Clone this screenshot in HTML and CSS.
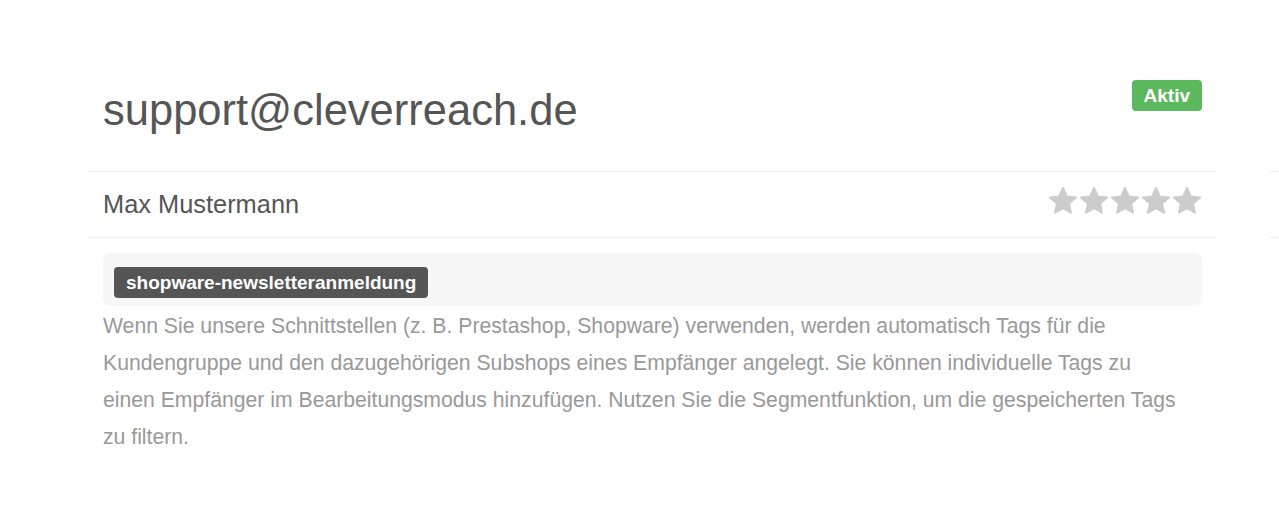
FILE: index.html
```
<!DOCTYPE html>
<html lang="de">

<head>
    <meta charset="UTF-8">
    <meta name="viewport" content="width=device-width, initial-scale=1.0">
    <title>Empfänger</title>
    <link rel="stylesheet" href="styles.css">
</head>

<body>
    <div class="cards">
        <div class="card">
            <div class="card-head">
                <h1 class="email">support@cleverreach.de</h1>
                <span class="badge">Aktiv</span>
            </div>
            <div class="card-name">
                <span class="name">Max Mustermann</span>
                <div class="stars">
                    <svg class="star" viewBox="0 0 30 30"><polygon points="15,2 18.8,10.4 28,11.4 21.1,17.6 23,26.7 15,22.1 7,26.7 8.9,17.6 2,11.4 11.2,10.4"/></svg>
                    <svg class="star" viewBox="0 0 30 30"><polygon points="15,2 18.8,10.4 28,11.4 21.1,17.6 23,26.7 15,22.1 7,26.7 8.9,17.6 2,11.4 11.2,10.4"/></svg>
                    <svg class="star" viewBox="0 0 30 30"><polygon points="15,2 18.8,10.4 28,11.4 21.1,17.6 23,26.7 15,22.1 7,26.7 8.9,17.6 2,11.4 11.2,10.4"/></svg>
                    <svg class="star" viewBox="0 0 30 30"><polygon points="15,2 18.8,10.4 28,11.4 21.1,17.6 23,26.7 15,22.1 7,26.7 8.9,17.6 2,11.4 11.2,10.4"/></svg>
                    <svg class="star" viewBox="0 0 30 30"><polygon points="15,2 18.8,10.4 28,11.4 21.1,17.6 23,26.7 15,22.1 7,26.7 8.9,17.6 2,11.4 11.2,10.4"/></svg>
                </div>
            </div>
            <div class="card-body">
                <div class="tags">
                    <span class="tag">shopware-newsletteranmeldung</span>
                </div>
                <p class="hint">Wenn Sie unsere Schnittstellen (z. B. Prestashop, Shopware) verwenden, werden automatisch Tags für die<br>
                    Kundengruppe und den dazugehörigen Subshops eines Empfänger angelegt. Sie können individuelle Tags zu<br>
                    einen Empfänger im Bearbeitungsmodus hinzufügen. Nutzen Sie die Segmentfunktion, um die gespeicherten Tags<br>
                    zu filtern.</p>
            </div>
        </div>
        <div class="card">
            <div class="card-head"></div>
            <div class="card-name"></div>
        </div>
    </div>
</body>

</html>
```

FILE: styles.css
```
body {
    margin: 0;
    overflow: hidden;
    background: #fff;
    font-family: "Liberation Sans", Arial, sans-serif;
}

.cards {
    display: flex;
    gap: 54px;
    padding-left: 88px;
    width: 100vw;
    box-sizing: border-box;
    overflow: hidden;
}

.card {
    flex: 0 0 1128px;
}

.card-head {
    box-sizing: border-box;
    height: 172px;
    padding: 80px 14px 0 15px;
    border-bottom: 1px solid #eee;
    display: flex;
    justify-content: space-between;
    align-items: flex-start;
}

.email {
    margin: 6px 0 0 0;
    font-size: 43.5px;
    font-weight: normal;
    line-height: normal;
    color: #555;
}

.badge {
    background-color: #5cb85c;
    color: #fff;
    font-size: 19px;
    font-weight: bold;
    line-height: 21px;
    padding: 5px 12px;
    border-radius: 4px;
}

.card-name {
    box-sizing: border-box;
    height: 66px;
    padding: 0 14px 0 15px;
    border-bottom: 1px solid #eee;
    display: flex;
    justify-content: space-between;
    align-items: center;
}

.name {
    font-size: 25.4px;
    color: #555;
}

.stars {
    display: flex;
    gap: 1px;
    margin-bottom: 8px;
}

.star {
    width: 30px;
    height: 30px;
    fill: #ccc;
    stroke: #ccc;
    stroke-width: 2;
    stroke-linejoin: round;
}

.card-body {
    padding: 15px 14px 0 15px;
}

.tags {
    background-color: #f7f7f7;
    border-radius: 7px;
    padding: 14px 11px 8px;
    display: flex;
}

.tag {
    background-color: #555;
    color: #fff;
    font-size: 19px;
    font-weight: bold;
    line-height: 21px;
    padding: 5px 12px;
    border-radius: 4px;
}

.hint {
    margin: 1px 0 0 0;
    font-size: 21.2px;
    line-height: 37px;
    color: #999;
}
```
